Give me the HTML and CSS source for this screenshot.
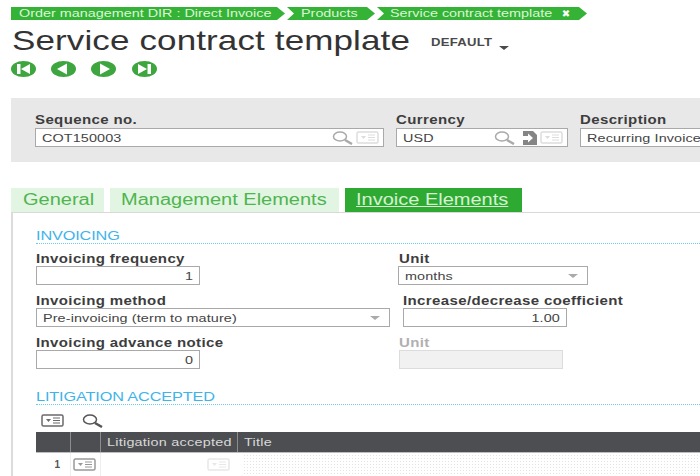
FILE: index.html
```html
<!DOCTYPE html>
<html lang="en">
<head>
	<meta charset="UTF-8">
	<title>Service contract template</title>
	<link rel="stylesheet" href="styles.css">
</head>
<body>
	<svg class="defs" width="0" height="0">
		<defs>
			<symbol id="lookup" viewBox="0 0 22 14">
				<ellipse cx="8" cy="5.500" rx="6.500" ry="4.500" fill="none" stroke="currentColor" stroke-width="1.500"/>
				<path d="M13 9l7 4" stroke="currentColor" stroke-width="2.500" fill="none"/>
			</symbol>
			<symbol id="menu" viewBox="0 0 23 13">
				<rect x="1" y="1" width="21" height="11" rx="1.500" fill="#fff" stroke="currentColor" stroke-width="1.500"/>
				<path d="M5 5h5l-2.500 3z" fill="currentColor"/>
				<path d="M12 4h7M12 6.500h7M12 9h7" stroke="currentColor" stroke-width="1"/>
			</symbol>
		</defs>
	</svg>

	<!-- Breadcrumb -->
	<nav class="crumbs">
		<a href="#" class="crumb crumb-first"><span class="wide">Order management DIR : Direct Invoice</span></a>
		<a href="#" class="crumb crumb-products"><span class="wide">Products</span></a>
		<a href="#" class="crumb crumb-current"><span class="wide">Service contract template</span><span class="crumb-close">&#10006;</span></a>
	</nav>

	<header class="page-title">
		<h1>Service contract template</h1>
		<span class="variant">DEFAULT</span>
		<span class="variant-arrow"></span>
	</header>

	<div class="pager">
		<svg viewBox="0 0 25 16" width="25" height="16"><ellipse cx="12.500" cy="8" rx="12.500" ry="8" fill="#3da63f"/><path d="M6 3h3.500v10H6zM19 3v10l-9-5z" fill="#fff"/></svg>
		<svg viewBox="0 0 25 16" width="25" height="16"><ellipse cx="12.500" cy="8" rx="12.500" ry="8" fill="#3da63f"/><path d="M16 2.500v11L6 8z" fill="#fff"/></svg>
		<svg viewBox="0 0 25 16" width="25" height="16"><ellipse cx="12.500" cy="8" rx="12.500" ry="8" fill="#3da63f"/><path d="M9 2.500v11L19 8z" fill="#fff"/></svg>
		<svg viewBox="0 0 25 16" width="25" height="16"><ellipse cx="12.500" cy="8" rx="12.500" ry="8" fill="#3da63f"/><path d="M6 3v10l9-5zM15.500 3H19v10h-3.500z" fill="#fff"/></svg>
	</div>

	<!-- Header fields -->
	<section class="head-panel">
		<div class="field field-seq">
			<label>Sequence no.</label>
			<div class="input">
				<span class="value">COT150003</span>
				<svg class="ico ico-lookup"><use href="#lookup"/></svg>
				<svg class="ico ico-menu"><use href="#menu"/></svg>
			</div>
		</div>
		<div class="field field-currency">
			<label>Currency</label>
			<div class="input">
				<span class="value">USD</span>
				<svg class="ico ico-lookup"><use href="#lookup"/></svg>
				<svg class="ico-jump" viewBox="0 0 16 14" width="16" height="14"><path d="M1 0h10l4 4v10H1z" fill="#858585"/><path d="M1 5h5V2.500L11 7l-5 4.500V9H1z" fill="#fff"/></svg>
				<svg class="ico ico-menu"><use href="#menu"/></svg>
			</div>
		</div>
		<div class="field field-desc">
			<label>Description</label>
			<div class="input"><span class="value">Recurring Invoice</span></div>
		</div>
	</section>

	<!-- Tabs -->
	<div class="tabs">
		<a href="#" class="tab tab-general"><span class="tab-text">General</span></a>
		<a href="#" class="tab tab-mgmt"><span class="tab-text">Management Elements</span></a>
		<a href="#" class="tab tab-active"><span class="tab-text">Invoice Elements</span></a>
	</div>

	<main class="tab-content">
		<h2 class="section-title"><span class="wide">INVOICING</span></h2>

		<div class="form-row">
			<div class="field col-left">
				<label>Invoicing frequency</label>
				<div class="input input-num"><span class="value">1</span></div>
			</div>
			<div class="field col-unit">
				<label>Unit</label>
				<div class="input input-select"><span class="value">months</span><i class="caret"></i></div>
			</div>
		</div>

		<div class="form-row">
			<div class="field col-method">
				<label>Invoicing method</label>
				<div class="input input-select"><span class="value">Pre-invoicing (term to mature)</span><i class="caret"></i></div>
			</div>
			<div class="field col-coef">
				<label>Increase/decrease coefficient</label>
				<div class="input input-num"><span class="value">1.00</span></div>
			</div>
		</div>

		<div class="form-row">
			<div class="field col-left">
				<label>Invoicing advance notice</label>
				<div class="input input-num"><span class="value">0</span></div>
			</div>
			<div class="field col-unit2 field-disabled">
				<label>Unit</label>
				<div class="input"></div>
			</div>
		</div>

		<h2 class="section-title section-litigation"><span class="wide">LITIGATION ACCEPTED</span></h2>

		<div class="grid-tools">
			<svg class="tool-menu"><use href="#menu"/></svg>
			<svg class="tool-lookup"><use href="#lookup"/></svg>
		</div>

		<div class="grid-head">
			<div class="cell cell-num"></div>
			<div class="cell cell-act"></div>
			<div class="cell cell-lit"><span class="wide">Litigation accepted</span></div>
			<div class="cell cell-title"><span class="wide">Title</span></div>
		</div>
		<div class="grid-row">
			<div class="cell cell-num">1</div>
			<div class="cell cell-act"><svg class="row-menu"><use href="#menu"/></svg></div>
			<div class="cell cell-lit"><svg class="row-menu row-menu-off"><use href="#menu"/></svg></div>
			<div class="cell cell-dots"></div>
		</div>
	</main>
</body>
</html>
```

FILE: styles.css
```css
* {
	margin: 0;
	padding: 0;
	box-sizing: border-box;
}

html {
	overflow: hidden;
}

body {
	width: 700px;
	height: 476px;
	overflow: hidden;
	background: #FFF;
	color: #333;
	font-family: 'Liberation Sans', Arial, sans-serif;
	font-size: 11.5px;
}

.defs {
	display: block;
	height: 0;
}

.wide,
.tab-text,
label,
.value,
.variant,
.page-title h1 {
	transform: scaleX(1.25);
	transform-origin: left center;
}

.wide,
.tab-text {
	display: inline-block;
}

/* Breadcrumb */
.crumbs {
	display: flex;
	height: 13px;
	margin: 7px 0 0 11px;
}

.crumb {
	display: block;
	height: 13px;
	line-height: 13px;
	background: #35b336;
	color: #dcf3d8;
	text-decoration: none;
	white-space: nowrap;
}

.crumb-first {
	width: 274px;
	padding-left: 8px;
	clip-path: polygon(0 0, 266px 0, 100% 50%, 266px 100%, 0 100%);
}

.crumb-products {
	width: 88px;
	margin-left: 2px;
	padding-left: 14px;
	clip-path: polygon(0 0, 80px 0, 100% 50%, 80px 100%, 0 100%, 7px 50%);
}

.crumb-current {
	width: 210px;
	margin-left: 2px;
	padding-left: 13px;
	clip-path: polygon(0 0, 202px 0, 100% 50%, 202px 100%, 0 100%, 7px 50%);
}

.crumb-close {
	color: #FFF;
	font-family: 'DejaVu Sans', sans-serif;
	font-size: 10px;
	margin-left: 42px;
}

/* Title */
.page-title {
	display: flex;
	align-items: baseline;
	height: 33px;
	margin: 4px 0 0 12px;
}

.page-title h1 {
	flex: none;
	margin-right: 101px;
	font-size: 28px;
	font-weight: 400;
	letter-spacing: 0.1px;
	line-height: 33px;
	white-space: nowrap;
	color: #333;
}

.variant {
	position: relative;
	top: -4px;
	flex: none;
	margin-right: 19px;
	font-size: 10.5px;
	font-weight: 700;
	letter-spacing: 0.2px;
	color: #4a4a4a;
}

.variant-arrow {
	width: 0;
	height: 0;
	border-left: 5.5px solid transparent;
	border-right: 5.5px solid transparent;
	border-top: 4px solid #4a4a4a;
}

.pager {
	display: flex;
	gap: 15px;
	margin: 4px 0 0 11px;
	height: 16px;
}

.pager svg:nth-child(4) {
	margin-left: 1px;
}

/* Fields */
.field label {
	display: block;
	width: max-content;
	height: 13px;
	line-height: 13px;
	font-size: 12px;
	font-weight: 700;
	letter-spacing: 0.3px;
	color: #3d3d3d;
	white-space: nowrap;
}

.input {
	display: flex;
	align-items: center;
	height: 19px;
	padding: 0 6px;
	background: #FFF;
	border: 1px solid #a9a9a9;
	border-width: 1px 1.5px 1.5px 1.5px;
	color: #444;
	white-space: nowrap;
	overflow: hidden;
}

.value {
	flex: 1;
	letter-spacing: 0.1px;
}

.input-num .value {
	text-align: right;
	transform-origin: right center;
}

.ico {
	flex: none;
}

.ico-lookup {
	width: 22px;
	height: 14px;
	color: #aaa;
}

.ico-menu {
	width: 23px;
	height: 13px;
	margin-left: 2px;
	margin-right: -2px;
	color: #ddd;
}

.ico-jump {
	flex: none;
	margin-left: 6px;
}

/* Header panel */
.head-panel {
	display: flex;
	height: 64px;
	margin: 21px 0 0 11px;
	padding: 16px 0 0 24px;
	background: #e8e8e8;
}

.head-panel label {
	margin-bottom: 1px;
}

.field-seq {
	flex: none;
	width: 349px;
}

.field-currency {
	flex: none;
	width: 172px;
	margin-left: 12px;
}

.field-desc {
	flex: none;
	width: 120px;
	margin-left: 12px;
}

.field-desc .input {
	border-right: 0;
}

/* Tabs */
.tabs {
	display: flex;
	height: 24px;
	margin: 26px 0 0 11px;
}

.tab {
	display: block;
	line-height: 24px;
	font-size: 16px;
	text-decoration: none;
	white-space: nowrap;
	background: #e2f4e2;
	color: #4fb54f;
}

.tab-general {
	width: 93px;
	padding-left: 12px;
}

.tab-mgmt {
	width: 229px;
	margin-left: 6px;
	padding-left: 11px;
}

.tab-active {
	width: 177px;
	margin-left: 6px;
	padding-left: 11px;
	background: #2eaa33;
	color: #d7f0d2;
}

.tab-active .tab-text {
	text-decoration: underline;
}

/* Tab content */
.tab-content {
	margin-left: 11px;
	padding: 16px 0 0 23px;
	border-top: 1px solid #d9d9d9;
	border-left: 2px solid #dcdcdc;
	height: 264px;
}

.section-title {
	height: 15px;
	line-height: 14px;
	border-bottom: 1px dotted #6cc9f0;
	font-size: 13px;
	font-weight: 400;
	letter-spacing: -0.1px;
	color: #3db4ea;
}

.form-row {
	display: flex;
	height: 42px;
}

.section-title + .form-row {
	margin-top: 9px;
}

.col-left {
	width: 164px;
}

.col-unit {
	width: 190px;
	margin-left: 198px;
}

.col-unit label {
	margin-left: 1px;
}

.col-method {
	width: 354px;
}

.col-coef {
	width: 164px;
	margin-left: 13px;
}

.col-unit2 {
	width: 164px;
	margin-left: 199px;
}

.caret {
	flex: none;
	width: 0;
	height: 0;
	margin-right: 3px;
	border-left: 5.5px solid transparent;
	border-right: 5.5px solid transparent;
	border-top: 4px solid #aaa;
}

.field-disabled label {
	color: #b0b0b0;
}

.field-disabled .input {
	background: #f1f1f1;
	border: 1px solid #dcdcdc;
}

.section-litigation {
	margin-top: 11px;
}

/* Grid */
.grid-tools {
	display: flex;
	align-items: center;
	height: 27px;
	padding-top: 4px;
}

.tool-menu {
	width: 23px;
	height: 13px;
	margin-left: 5px;
	color: #6a6a6a;
}

.tool-lookup {
	width: 22px;
	height: 14px;
	margin-left: 18px;
	color: #555;
}

.grid-head,
.grid-row {
	display: flex;
}

.grid-head {
	height: 21px;
	line-height: 21px;
	background: #4d4e52;
	color: #d8d8d8;
	border-bottom: 1px solid #bdbdbd;
	letter-spacing: 0.2px;
	white-space: nowrap;
}

.grid-row {
	height: 23px;
}

.cell {
	flex: none;
}

.grid-head .cell {
	border-right: 1px solid #8c8c8c;
	padding-left: 6px;
}

.grid-head .cell-title {
	flex: 1;
	border-right: 0;
}

.cell-num {
	width: 35px;
}

.cell-act {
	width: 30px;
}

.cell-lit {
	width: 137px;
}

.grid-row .cell-num {
	line-height: 23px;
	padding-right: 10px;
	text-align: right;
	font-weight: 700;
	font-size: 10px;
	color: #555;
	border-right: 1px solid #eee;
}

.grid-row .cell-act {
	padding: 5px 0 0 2px;
	border-right: 1px solid #eee;
}

.row-menu {
	display: block;
	width: 23px;
	height: 13px;
	color: #999;
}

.grid-row .cell-lit {
	padding: 5px 0 0 106px;
}

.row-menu-off {
	color: #e8e8e8;
}

.cell-dots {
	flex: 1;
	margin: 1px 0 0 5px;
	background-image: radial-gradient(#e4e4e4 1px, transparent 1px);
	background-size: 3px 3px;
}
```
